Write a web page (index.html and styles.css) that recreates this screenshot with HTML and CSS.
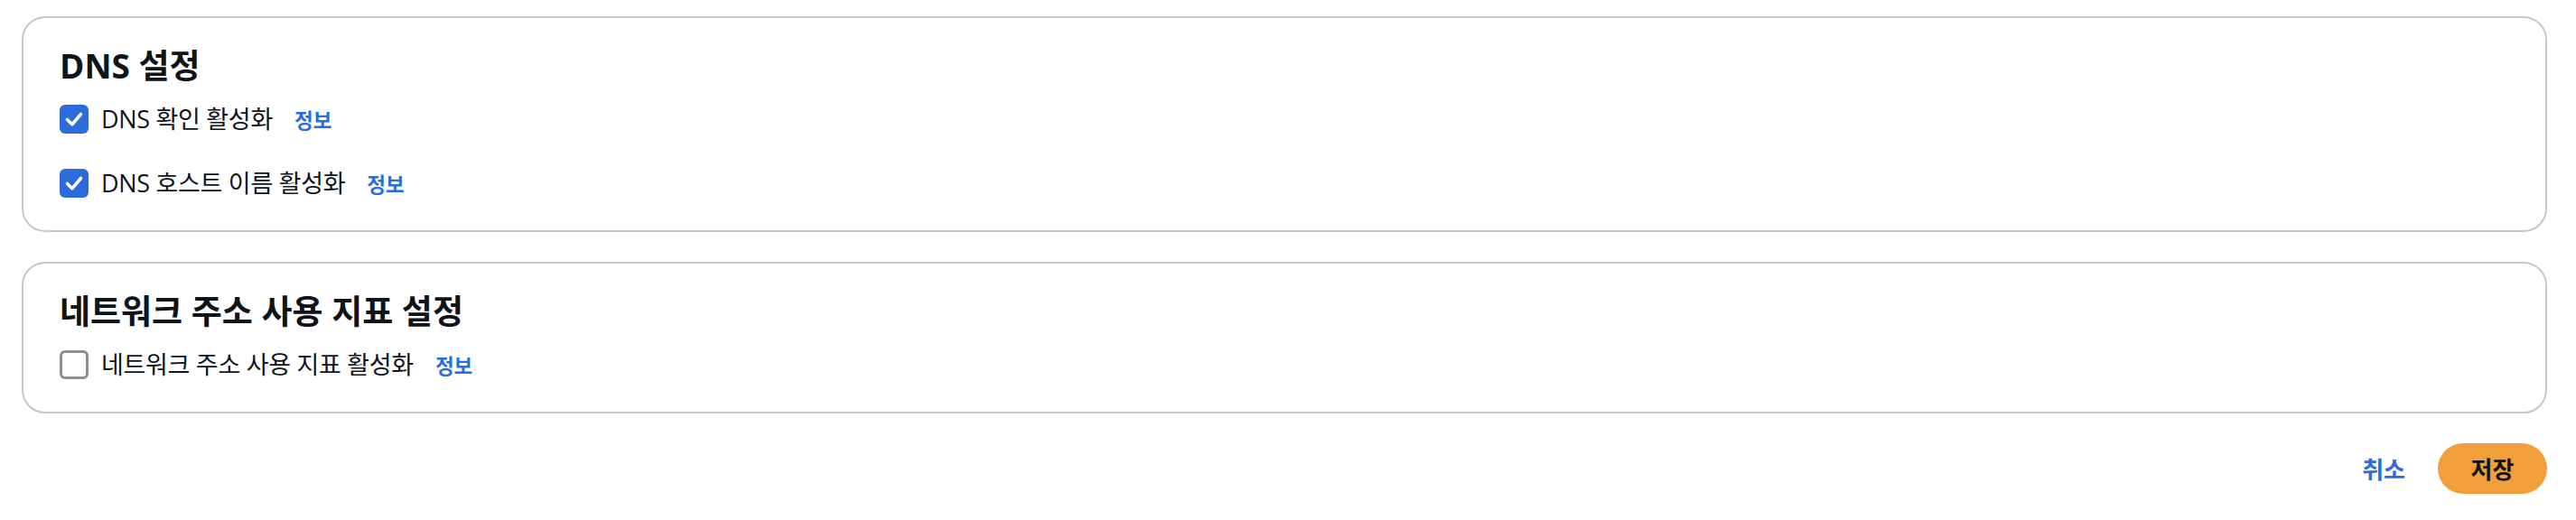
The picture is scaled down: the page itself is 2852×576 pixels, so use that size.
FILE: index.html
```html
<!DOCTYPE html>
<html lang="ko">
<head>
<meta charset="utf-8">
<title>VPC 설정 편집</title>
<link rel="stylesheet" href="styles.css">
</head>
<body>
<main class="page">
  <section class="card">
    <h2 class="card-title">DNS 설정</h2>
    <div class="rows">
      <label class="row">
        <span class="box box-checked"><svg viewBox="0 0 32 32" width="32" height="32"><path d="M8.5 16.5 L13.8 21.8 L23.5 10.5" fill="none" stroke="#fff" stroke-width="3.6" stroke-linecap="round" stroke-linejoin="round"/></svg></span>
        <span class="label">DNS 확인 활성화</span>
        <a class="info" href="#">정보</a>
      </label>
      <label class="row">
        <span class="box box-checked"><svg viewBox="0 0 32 32" width="32" height="32"><path d="M8.5 16.5 L13.8 21.8 L23.5 10.5" fill="none" stroke="#fff" stroke-width="3.6" stroke-linecap="round" stroke-linejoin="round"/></svg></span>
        <span class="label">DNS 호스트 이름 활성화</span>
        <a class="info" href="#">정보</a>
      </label>
    </div>
  </section>
  <section class="card">
    <h2 class="card-title">네트워크 주소 사용 지표 설정</h2>
    <div class="rows">
      <label class="row">
        <span class="box box-empty"></span>
        <span class="label">네트워크 주소 사용 지표 활성화</span>
        <a class="info" href="#">정보</a>
      </label>
    </div>
  </section>
  <div class="actions">
    <a class="btn-link" href="#">취소</a>
    <button class="btn-primary" type="button">저장</button>
  </div>
</main>
</body>
</html>
```

FILE: styles.css
```css
* { box-sizing: border-box; }
html, body { margin: 0; padding: 0; background: #ffffff; }
body {
  font-family: "Open Sans", "Noto Sans CJK KR", sans-serif;
  color: #0f141a;
}
.page {
  padding: 18px 32px 0 24px;
  display: flex;
  flex-direction: column;
  gap: 33px;
}
.card {
  border: 2px solid #c6c6cd;
  border-radius: 26px;
  padding: 28px 40px 30px 40px;
  display: flex;
  flex-direction: column;
  gap: 12px;
}
.card-title {
  margin: 0;
  font-size: 37px;
  line-height: 50px;
  font-weight: 700;
  color: #0f141a;
}
.rows {
  display: flex;
  flex-direction: column;
  gap: 27px;
}
.row {
  display: flex;
  align-items: center;
  height: 44px;
}
.box {
  width: 32px;
  height: 32px;
  border-radius: 6px;
  flex: none;
  display: flex;
}
.box-checked { background: #2c6bdc; }
.box-empty { border: 3px solid #8c8c94; background: #fff; }
.label {
  margin-left: 14px;
  font-size: 27px;
  letter-spacing: -0.3px;
  line-height: 44px;
  color: #0f141a;
}
.info {
  margin-left: 24px;
  font-size: 22.5px;
  font-weight: 700;
  color: #2c6bdc;
  text-decoration: none;
}
.actions {
  display: flex;
  justify-content: flex-end;
  align-items: center;
  gap: 36px;
}
.btn-link {
  font-size: 26px;
  font-weight: 700;
  color: #2c6bdc;
  text-decoration: none;
}
.btn-primary {
  width: 121px;
  height: 56px;
  border: none;
  border-radius: 28px;
  background: #f19f3a;
  color: #0f141a;
  font-family: "Open Sans", "Noto Sans CJK KR", sans-serif;
  font-size: 26px;
  font-weight: 700;
  padding: 0;
}
```
